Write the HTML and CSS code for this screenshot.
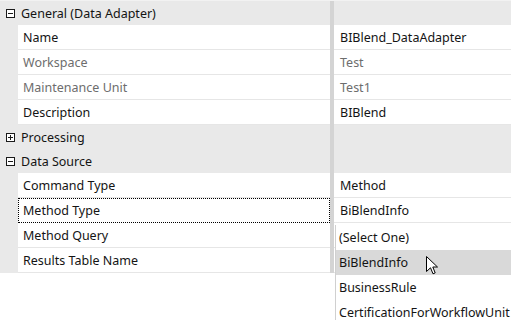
FILE: index.html
```html
<!DOCTYPE html>
<html>
<head>
<meta charset="utf-8">
<link rel="stylesheet" href="styles.css">
</head>
<body>
<div class="grid">
  <div class="row cat">
    <div class="gutter"><span class="box"><span class="h"></span></span></div>
    <div class="name">General (Data Adapter)</div>
    <div class="split"></div>
    <div class="value"></div>
  </div>
  <div class="row prop">
    <div class="gutter"></div>
    <div class="name">Name</div>
    <div class="split"></div>
    <div class="value">BIBlend_DataAdapter</div>
  </div>
  <div class="row prop ro">
    <div class="gutter"></div>
    <div class="name">Workspace</div>
    <div class="split"></div>
    <div class="value">Test</div>
  </div>
  <div class="row prop ro">
    <div class="gutter"></div>
    <div class="name">Maintenance Unit</div>
    <div class="split"></div>
    <div class="value">Test1</div>
  </div>
  <div class="row prop">
    <div class="gutter"></div>
    <div class="name">Description</div>
    <div class="split"></div>
    <div class="value">BIBlend</div>
  </div>
  <div class="row cat">
    <div class="gutter"><span class="box"><span class="h"></span><span class="v"></span></span></div>
    <div class="name">Processing</div>
    <div class="split"></div>
    <div class="value"></div>
  </div>
  <div class="row cat">
    <div class="gutter"><span class="box"><span class="h"></span></span></div>
    <div class="name">Data Source</div>
    <div class="split"></div>
    <div class="value"></div>
  </div>
  <div class="row prop">
    <div class="gutter"></div>
    <div class="name">Command Type</div>
    <div class="split"></div>
    <div class="value">Method</div>
  </div>
  <div class="row prop focus">
    <div class="gutter"></div>
    <div class="name">Method Type</div>
    <div class="split"></div>
    <div class="value">BiBlendInfo</div>
  </div>
  <div class="row prop">
    <div class="gutter"></div>
    <div class="name">Method Query</div>
    <div class="split"></div>
    <div class="value"></div>
  </div>
  <div class="row prop">
    <div class="gutter"></div>
    <div class="name">Results Table Name</div>
    <div class="split"></div>
    <div class="value"></div>
  </div>

  <div class="dropdown">
    <div class="item">(Select One)</div>
    <div class="item sel">BiBlendInfo</div>
    <div class="item">BusinessRule</div>
    <div class="item">CertificationForWorkflowUnit</div>
  </div>

  <svg class="cursor" width="13" height="20" viewBox="0 0 13 20">
    <path d="M0.5 0.5 L0.5 15.5 L4.5 11.8 L7 17.8 L9.2 16.9 L6.8 11 L11.5 11 Z" fill="#fff" stroke="#000" stroke-width="1" stroke-linejoin="miter"/>
  </svg>
</div>
</body>
</html>
```

FILE: styles.css
```css
html, body {
  margin: 0;
  padding: 0;
  background: #ffffff;
}

body {
  width: 511px;
  height: 320px;
  overflow: hidden;
  font-family: "Noto Sans", "Open Sans", sans-serif;
  font-size: 12.5px;
  color: #141414;
}

.grid {
  position: relative;
  height: 320px;
  border-top: 1px solid #f2f2f2;
}

.row {
  display: flex;
  height: 24px;
}

.row.prop {
  height: 25px;
}

.gutter {
  width: 18px;
  flex: none;
  background: #e9e9e9;
  display: flex;
  align-items: center;
  justify-content: center;
}

.name {
  width: 312px;
  flex: none;
  box-sizing: border-box;
  padding-left: 5px;
  padding-top: 2px;
  line-height: 22px;
  white-space: nowrap;
}

.split {
  width: 4px;
  flex: none;
  background: #d4d4d4;
}

.value {
  flex: 1;
  box-sizing: border-box;
  padding-left: 6px;
  padding-top: 2px;
  line-height: 22px;
  white-space: nowrap;
}

.cat .name,
.cat .value {
  background: #e9e9e9;
}

.cat .name {
  padding-left: 3px;
}

.prop .name,
.prop .value {
  background: #ffffff;
  border-bottom: 1px solid #e6e6e6;
}

.ro .name,
.ro .value {
  color: #6d6d6d;
}

.focus .name {
  border: 1px dotted #000;
  padding-top: 1px;
  padding-left: 4px;
}

.box {
  position: relative;
  width: 9px;
  height: 9px;
  box-sizing: border-box;
  border: 1px solid #1a1a1a;
  background: #ffffff;
  margin-left: 2px;
}

.box .h {
  position: absolute;
  left: 1px;
  top: 3px;
  width: 5px;
  height: 1px;
  background: #1a1a1a;
}

.box .v {
  position: absolute;
  left: 3px;
  top: 1px;
  width: 1px;
  height: 5px;
  background: #1a1a1a;
}

.dropdown {
  position: absolute;
  left: 335px;
  top: 224px;
  right: 0;
  bottom: 0;
  background: #ffffff;
  border-left: 1px solid #d0d0d0;
}

.item {
  height: 25px;
  box-sizing: border-box;
  padding-top: 2px;
  line-height: 22px;
  padding-left: 3px;
  white-space: nowrap;
  color: #141414;
}

.item.sel {
  background: #d9d9d9;
}

.cursor {
  position: absolute;
  left: 426px;
  top: 255px;
}
```
